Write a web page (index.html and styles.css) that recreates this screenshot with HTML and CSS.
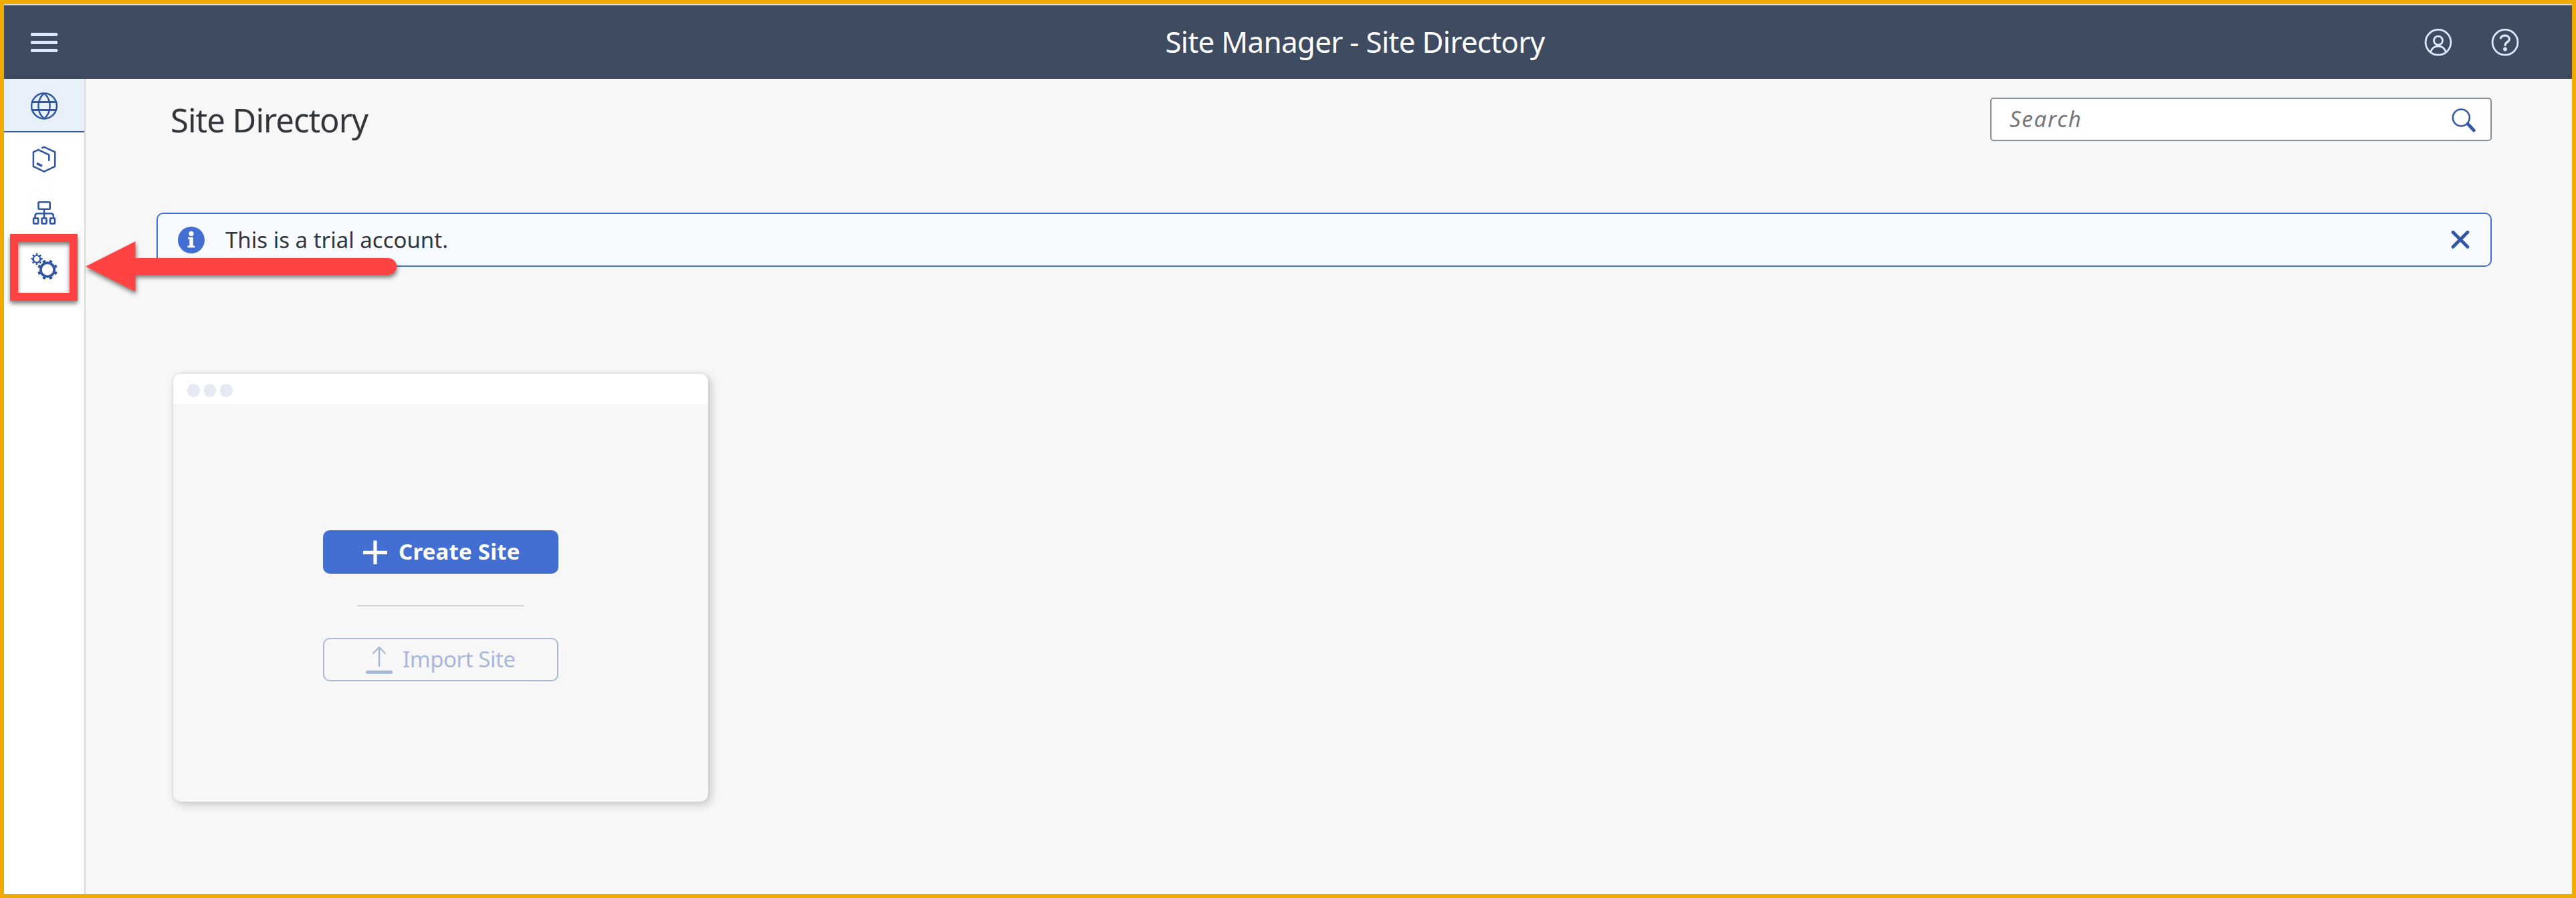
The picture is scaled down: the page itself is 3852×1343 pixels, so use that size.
FILE: index.html
```html
<!DOCTYPE html>
<html lang="en">
<head>
<meta charset="utf-8">
<title>Site Manager - Site Directory</title>
<link rel="stylesheet" href="styles.css">
</head>
<body>
<div class="app">
  <header class="shell">
    <svg class="icon" viewBox="0 0 40 40" fill="currentColor"><rect y="6" width="40" height="5" rx="1.5"/><rect y="18" width="40" height="5" rx="1.5"/><rect y="30" width="40" height="5" rx="1.5"/></svg>
    <div class="shell-title">Site Manager - Site Directory</div>
    <div class="shell-actions">
      <svg class="icon" viewBox="0 0 40 40" fill="none" stroke="currentColor" stroke-width="2.8"><circle cx="20" cy="20.3" r="18.9"/><circle cx="20" cy="17.7" r="6.5"/><path d="M8.6 35C10.5 28.5 15 26.2 20 26.2S29.5 28.5 31.4 35"/></svg>
      <svg class="icon" viewBox="0 0 40 40" fill="none" stroke="currentColor" stroke-width="2.8"><circle cx="20" cy="20.3" r="18.9"/><path stroke-width="3.2" stroke-linecap="round" d="M13.3 14C14.4 11 17 10.2 20 10.2C23.8 10.2 26.3 12.2 26.3 15.5C26.3 20.2 20.2 19.6 20 24.6"/><circle cx="20" cy="30.5" r="2.9" fill="currentColor" stroke="none"/></svg>
    </div>
  </header>
  <div class="body">
    <nav class="side">
      <a class="side-item selected"><svg class="icon" viewBox="0 0 40 40" fill="none" stroke="currentColor" stroke-width="2.5"><circle cx="20" cy="20.5" r="18.9"/><path d="M20 1.6C8.5 11 8.5 30 20 39.4C31.5 30 31.5 11 20 1.6"/><path stroke-width="2.8" d="M2.8 14.5H37.2M2.8 26.5H37.2"/></svg></a>
      <a class="side-item"><svg class="icon" viewBox="0 0 40 40" fill="none" stroke="currentColor" stroke-width="2.5"><path d="M16.3 3.5L20 1.8L36.2 9.3V31L20 38.6L3.9 31V9.6L11.3 6L27.3 13.6V22.8"/><path stroke-width="3.4" d="M9 26.4L17 30.2"/></svg></a>
      <a class="side-item"><svg class="icon" viewBox="0 0 40 40" fill="none" stroke="currentColor" stroke-width="2.6"><rect x="11.5" y="4.3" width="17.2" height="10.5" rx="1"/><path d="M20 15V29M6.6 29V25Q6.6 21.2 10.5 21.2H30Q33.9 21.2 33.9 25V29"/><rect x="4.1" y="28.4" width="7" height="8" rx="1"/><rect x="16.5" y="28.4" width="7" height="8" rx="1"/><rect x="29" y="28.4" width="7" height="8" rx="1"/></svg></a>
      <a class="side-item"><svg class="icon" viewBox="0 0 40 40" fill="none" stroke="currentColor"><circle cx="9" cy="9.3" r="5.3" stroke-width="2.2"/><circle cx="9" cy="9.3" r="7.3" stroke-width="2.8" pathLength="16" stroke-dasharray="0.9 1.1" transform="rotate(-10 9 9.3)"/><circle cx="25" cy="25.4" r="10.2" stroke-width="3.8"/><circle cx="25" cy="25.4" r="13" stroke-width="4" pathLength="16" stroke-dasharray="0.85 1.15" transform="rotate(13 25 25.4)"/></svg></a>
    </nav>
    <main class="content">
      <div class="page-head">
        <h1>Site Directory</h1>
        <div class="search"><span>Search</span><svg class="icon" viewBox="0 0 40 40" fill="none" stroke="currentColor"><circle cx="14.3" cy="17" r="12.5" stroke-width="2.5"/><path stroke-width="4.8" stroke-linecap="round" d="M24 26.2L33.3 36"/></svg></div>
      </div>
      <div class="strip">
        <svg class="icon info" viewBox="0 0 40 40"><circle cx="20" cy="20" r="20" fill="#446fd2"/><g fill="#fff"><circle cx="20" cy="10.4" r="3.6"/><path d="M15 15.8H22.8V28.4H25.3V31.2H14.5V28.4H17.3V18.4H15Z"/></g></svg>
        <span>This is a trial account.</span>
        <svg class="icon close" viewBox="0 0 40 40" stroke="currentColor" stroke-width="4.8" stroke-linecap="round"><path d="M9 8.3L31 30.3M31 8.3L9 30.3"/></svg>
      </div>
      <section class="card">
        <div class="card-bar"><i></i><i></i><i></i></div>
        <div class="card-body">
          <button class="btn primary"><svg class="icon" viewBox="0 0 40 40" stroke="currentColor" stroke-width="5.2" stroke-linecap="butt"><path d="M2 20.3H38M20 2.6V38"/></svg><span>Create Site</span></button>
          <hr>
          <button class="btn ghost"><svg class="icon" viewBox="0 0 40 40" fill="none" stroke="currentColor" stroke-width="2.4" stroke-linecap="round"><path d="M20 1.5V28.8M11 10L20 1.2L29 10"/><path stroke-width="5" d="M2.5 38.2H37.5"/></svg><span>Import Site</span></button>
        </div>
      </section>
    </main>
  </div>
  <div class="marker"></div>
  <svg class="arrow" viewBox="0 0 466 76"><path fill="#ff4343" d="M0 37.5L74.5 0V25H452.5A12.5 12.5 0 0 1 452.5 50H74.5V75Z"/></svg>
</div>
</body>
</html>
```
FILE: styles.css
```css
* { box-sizing: border-box; }
body { margin: 0; font-family: "Noto Sans", "Open Sans", sans-serif; color: #32363a; }
.app { position: relative; display: flex; flex-direction: column; width: 3852px; height: 1343px; border: 6px solid #f0ab00; background: #f7f7f7; overflow: hidden; }
.icon { width: 40px; height: 40px; flex: none; display: block; overflow: visible; }

.shell { display: grid; grid-template-columns: 1fr auto 1fr; align-items: center; height: 112px; padding: 0 80px 0 40px; border-top: 2px solid #e0e0e0; background: #3f4b61; color: #d9e7ff; }
.shell-title { padding: 0 0 2px 240px; color: #fff; font-size: 44px; line-height: 60px; letter-spacing: -0.74px; white-space: nowrap; }
.shell-actions { display: flex; justify-content: flex-end; gap: 60px; }

.body { display: flex; flex: 1; }
.side { width: 122px; border-right: 2px solid #d9d9d9; background: #fff; color: #3156a3; }
.side-item { display: flex; justify-content: center; height: 80px; padding-top: 20px; }
.side-item.selected { background: #e8f0fa; border-bottom: 2px solid #3156a3; }

.content { flex: 1; padding: 28px 120px 0 106px; }
.page-head { display: flex; justify-content: space-between; height: 65px; padding-left: 21px; }
h1 { margin: 0; font-size: 49px; font-weight: 400; line-height: 66px; letter-spacing: -1px; white-space: nowrap; }
.search { display: flex; justify-content: space-between; align-items: center; width: 750px; height: 65px; padding: 0 18px 0 27px; border: 2px solid #89919a; border-radius: 5px; background: #fff; color: #3156a3; }
.search span { padding-bottom: 1px; color: #74777a; font-size: 33px; font-style: italic; line-height: 46px; letter-spacing: 1.7px; }

.strip { display: flex; align-items: center; height: 81px; margin-top: 107px; padding: 0 25px 0 30px; border: 2px solid #446fd2; border-radius: 10px; background: #f7fbff; font-size: 33px; line-height: 46px; }
.strip span { margin-left: 31px; }
.strip .close { margin-left: auto; color: #3156a3; }

.card { width: 800px; height: 640px; margin: 160px 0 0 25px; border-radius: 12px; overflow: hidden; background: #f7f7f7; box-shadow: 4px 4px 14px rgba(0,0,0,.2), 0 0 5px rgba(0,0,0,.1); }
.card-bar { display: flex; gap: 6px; height: 45px; padding: 15px 0 0 21px; background: #fff; }
.card-bar i { width: 18.5px; height: 20px; border-radius: 50%; background: #e5e9f1; }
.card-body { display: flex; flex-direction: column; align-items: center; padding-top: 189px; }
hr { width: 250px; height: 2px; margin: 47px 0; border: 0; background: #d5d5d5; }
.btn { display: flex; align-items: center; width: 352px; height: 65px; padding: 0; border: 2px solid #446fd2; border-radius: 10px; font: 33px/46px "Noto Sans", sans-serif; white-space: nowrap; }
.btn span { padding-bottom: 1px; }
.primary { padding-left: 56px; background: #446fd2; color: #fff; font-weight: 700; }
.primary span { margin-left: 15px; letter-spacing: 0.2px; }
.ghost { padding-left: 62px; border-color: #a9b8d9; background: transparent; color: #a9b8d9; }
.ghost span { margin-left: 15px; letter-spacing: -0.45px; }

/* Callout drawn over the page: frame round the settings item, with an arrow */
.marker { position: absolute; left: 9px; top: 344px; width: 101px; height: 100px; border: 12px solid #ff4343; filter: drop-shadow(0 4px 3px rgba(0,0,0,.5)); }
.arrow { position: absolute; left: 122px; top: 355px; width: 466px; height: 76px; overflow: visible; filter: drop-shadow(1px 4px 3px rgba(0,0,0,.5)); }
```
